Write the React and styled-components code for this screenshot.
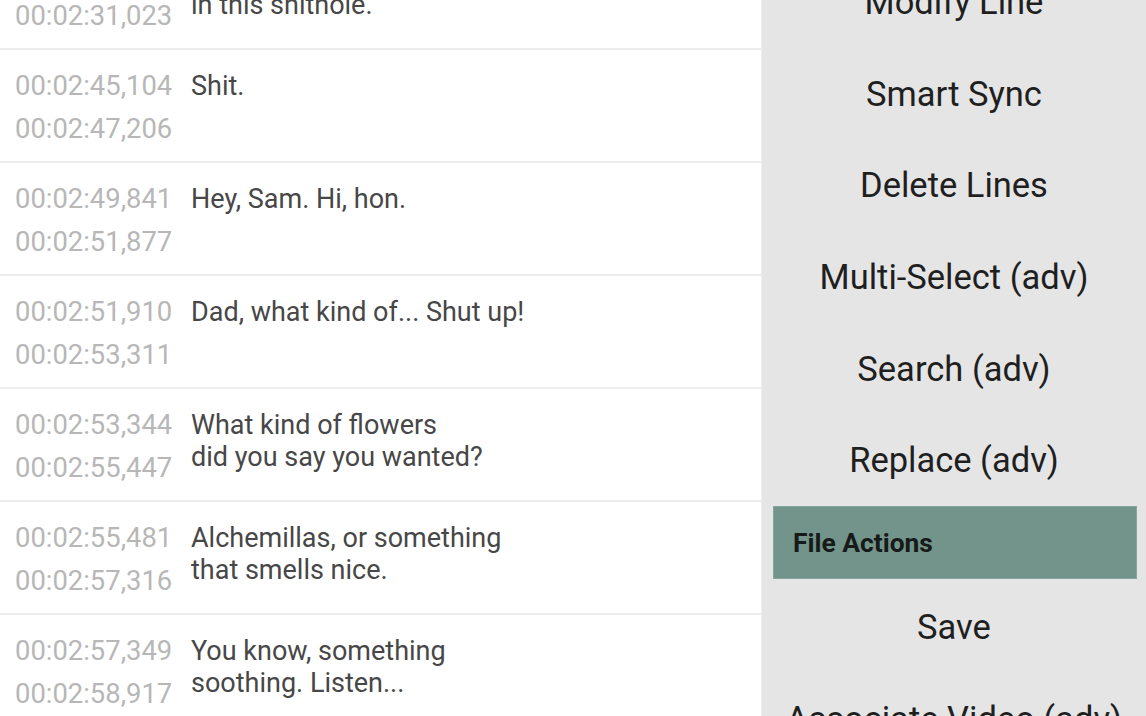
import React from 'react';
import styled, { createGlobalStyle } from 'styled-components';

const GlobalStyle = createGlobalStyle`
    html, body {
        margin: 0;
        padding: 0;
        background: #ffffff;
        overflow: hidden;
    }
    body {
        font-family: Roboto, "Noto Sans", sans-serif;
    }
`

const Screen = styled.div`
    display: flex;
    width: 1146px;
    height: 716px;
    overflow: hidden;
`

const LineList = styled.div`
    width: 761px;
    flex-shrink: 0;
    margin-top: -63px;
    background: #ffffff;
`

const LineRow = styled.div`
    display: flex;
    height: 111px;
    border-bottom: 2px solid #ededed;
`

const Times = styled.div`
    padding: 15px 0 0 15px;
    width: 176px;
    flex-shrink: 0;
    font-size: 27.4px;
    line-height: 43px;
    color: #b7b7b7;
`

const Caption = styled.div`
    padding-top: 20px;
    font-size: 27px;
    line-height: 32px;
    color: #474747;
    white-space: pre-line;
`

const Drawer = styled.div`
    flex: 1;
    background: #e5e5e5;
    border-left: 1px solid #eeeeee;
    display: flex;
    flex-direction: column;
`

const MenuList = styled.div`
    margin-top: -44px;
    display: flex;
    flex-direction: column;
`

const MenuItem = styled.div`
    height: 91.7px;
    display: flex;
    align-items: center;
    justify-content: center;
    font-size: 34.5px;
    color: #1f1f1f;
    white-space: nowrap;
`

const SectionHeader = styled.div`
    margin: 0 9px 2px 11px;
    height: 71px;
    background: #72948b;
    border: 1px solid #86a59c;
    display: flex;
    align-items: center;
    padding-left: 19px;
    font-size: 26.4px;
    font-weight: 700;
    color: #161a19;
`

const lines = [
    { start: '00:02:27,100', end: '00:02:31,023', text: 'Not another day\nin this shithole.' },
    { start: '00:02:45,104', end: '00:02:47,206', text: 'Shit.' },
    { start: '00:02:49,841', end: '00:02:51,877', text: 'Hey, Sam. Hi, hon.' },
    { start: '00:02:51,910', end: '00:02:53,311', text: 'Dad, what kind of... Shut up!' },
    { start: '00:02:53,344', end: '00:02:55,447', text: 'What kind of flowers\ndid you say you wanted?' },
    { start: '00:02:55,481', end: '00:02:57,316', text: 'Alchemillas, or something\nthat smells nice.' },
    { start: '00:02:57,349', end: '00:02:58,917', text: 'You know, something\nsoothing. Listen...' },
]

const editActions = ['Modify Line', 'Smart Sync', 'Delete Lines', 'Multi-Select (adv)', 'Search (adv)', 'Replace (adv)']
const fileActions = ['Save', 'Associate Video (adv)']

export default function App() {
    return (
        <>
            <GlobalStyle />
            <Screen>
                <LineList>
                    {lines.map((line) => (
                        <LineRow key={line.start}>
                            <Times>
                                <div>{line.start}</div>
                                <div>{line.end}</div>
                            </Times>
                            <Caption>{line.text}</Caption>
                        </LineRow>
                    ))}
                </LineList>
                <Drawer>
                    <MenuList>
                        {editActions.map((label) => (
                            <MenuItem key={label}>{label}</MenuItem>
                        ))}
                        <SectionHeader>File Actions</SectionHeader>
                        {fileActions.map((label) => (
                            <MenuItem key={label}>{label}</MenuItem>
                        ))}
                    </MenuList>
                </Drawer>
            </Screen>
        </>
    )
}
